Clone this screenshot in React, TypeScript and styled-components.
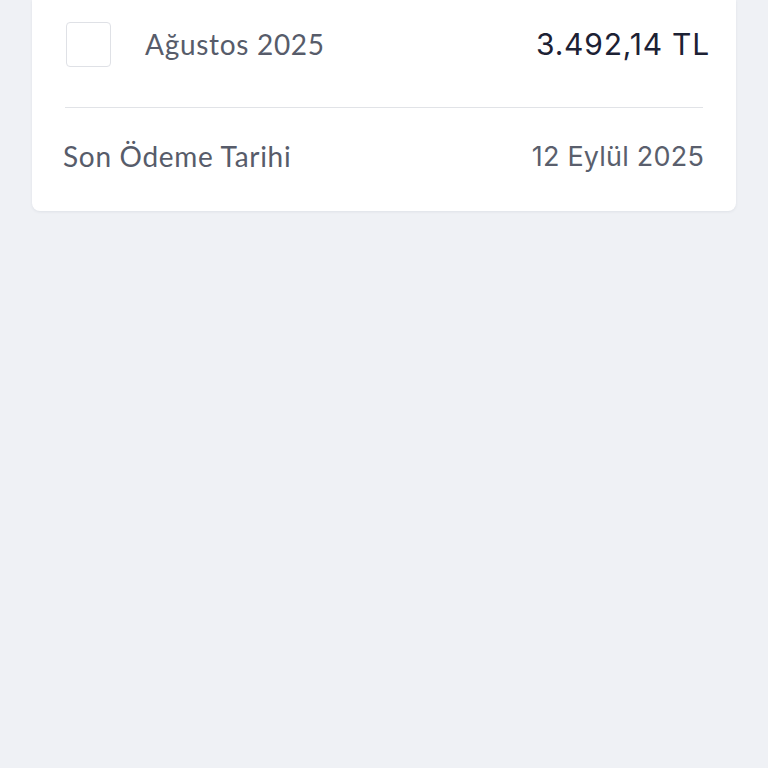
import React from "react";
import styled, { createGlobalStyle } from "styled-components";

const Global = createGlobalStyle`
  html, body { margin: 0; padding: 0; background: #eff1f5; }
  body { width: 768px; height: 768px; overflow: hidden; }
`;

const Page = styled.div`
  width: 768px;
  height: 768px;
  background: #eff1f5;
  padding: 0 32px;
  box-sizing: border-box;
`;

const Card = styled.div`
  background: #ffffff;
  border-radius: 0 0 8px 8px;
  box-shadow: 0 1px 3px rgba(40, 50, 80, 0.08);
  padding: 21px 26px 0 34px;
  height: 211px;
  box-sizing: border-box;
  display: flex;
  flex-direction: column;
`;

const TopRow = styled.div`
  display: flex;
  align-items: center;
  height: 46px;
`;

const Checkbox = styled.div`
  width: 43px;
  height: 43px;
  border: 1.5px solid #dfe1e6;
  border-radius: 4px;
  flex-shrink: 0;
`;

const Label = styled.span<{ $indent?: number }>`
  font-family: "Lato", "Noto Sans", sans-serif;
  font-size: 28px;
  letter-spacing: 0.7px;
  color: #575c6a;
  margin-left: ${(p) => p.$indent ?? 0}px;
`;

const Amount = styled.span`
  margin-left: auto;
  font-family: "Inter", "Noto Sans", sans-serif;
  font-size: 30px;
  font-weight: 400;
  color: #1c2134;
  letter-spacing: 0.8px;
`;

const Divider = styled.hr`
  border: none;
  border-top: 1.5px solid #e1e3e7;
  margin: 40px 7px 0 -1px;
`;

const BottomRow = styled.div`
  display: flex;
  align-items: center;
  justify-content: space-between;
  margin-top: 31px;
  margin-right: 6px;
  margin-left: -3px;
`;

const DateValue = styled.span`
  font-family: "Inter", "Noto Sans", sans-serif;
  font-size: 27px;
  letter-spacing: 0.2px;
  color: #5a5f6d;
`;

export default function App() {
  return (
    <>
      <Global />
      <Page>
        <Card>
          <TopRow>
            <Checkbox />
            <Label $indent={34}>Ağustos 2025</Label>
            <Amount>3.492,14 TL</Amount>
          </TopRow>
          <Divider />
          <BottomRow>
            <Label>Son Ödeme Tarihi</Label>
            <DateValue>12 Eylül 2025</DateValue>
          </BottomRow>
        </Card>
      </Page>
    </>
  );
}
